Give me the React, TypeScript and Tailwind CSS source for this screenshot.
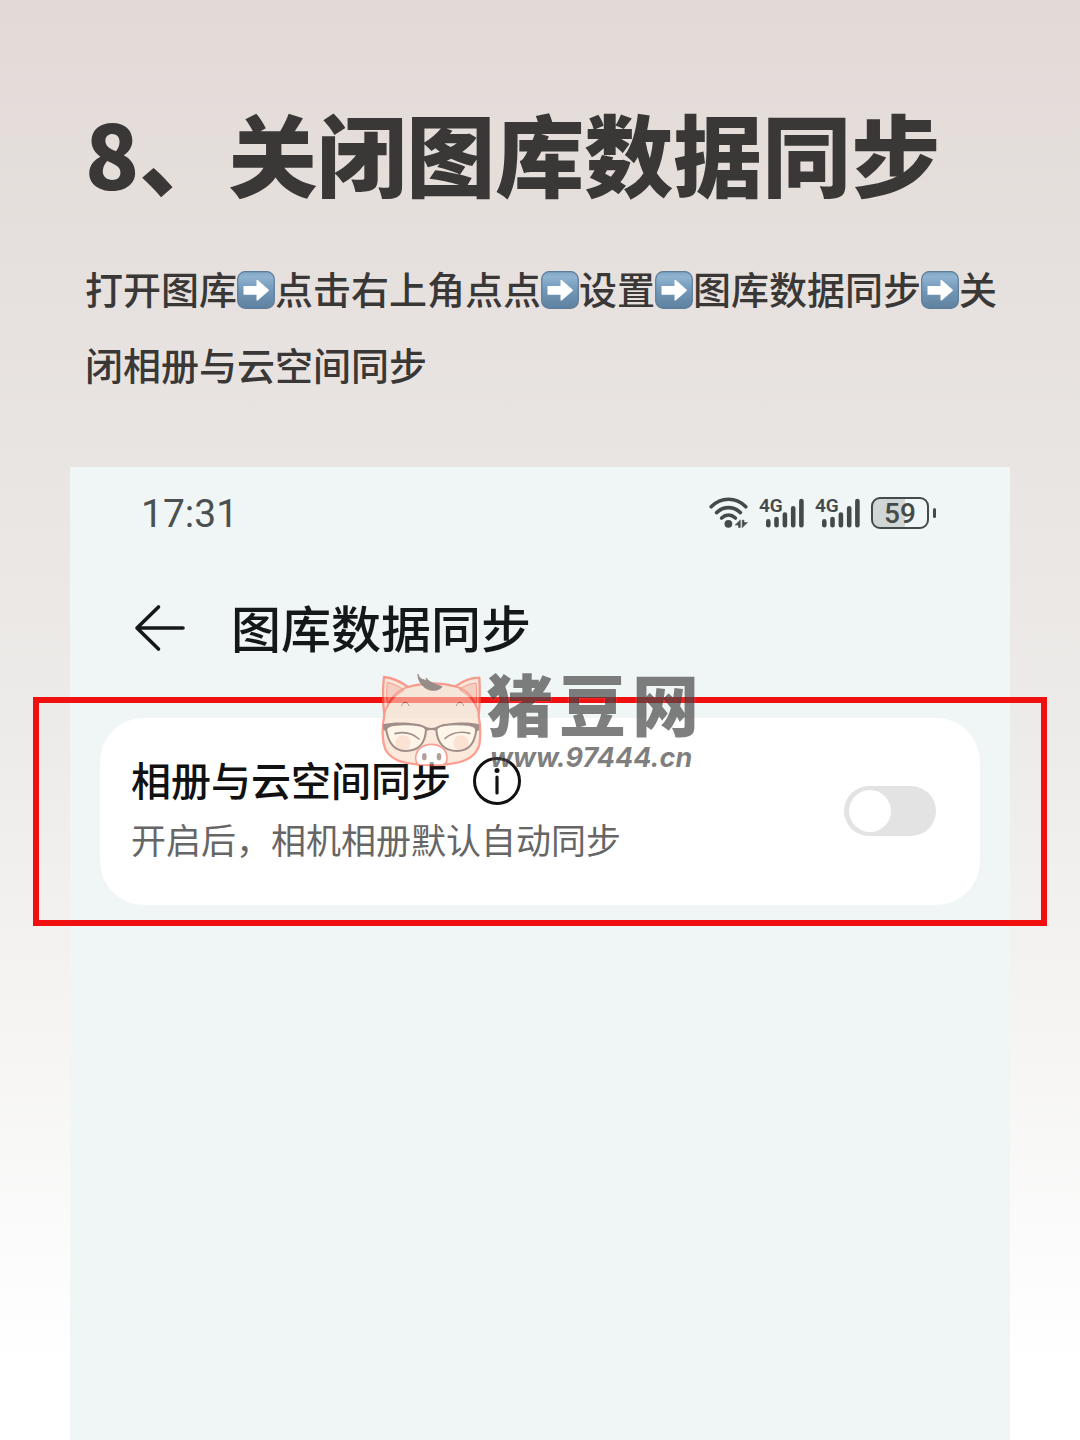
import { useState } from "react";

const sans = "font-['Noto_Sans_CJK_SC','Noto_Sans',sans-serif]";

function ArrowEmoji() {
  return (
    <svg
      role="img"
      aria-label="➡️"
      viewBox="0 0 38 38"
      className="inline-block size-[38px] align-[-5px]"
    >
      <defs>
        <linearGradient id="key" x1="0" y1="0" x2="0" y2="1">
          <stop offset="0" stopColor="#7fa6c6" />
          <stop offset="0.14" stopColor="#8fb3d0" />
          <stop offset="0.5" stopColor="#7398b8" />
          <stop offset="1" stopColor="#5f819f" />
        </linearGradient>
      </defs>
      <rect x="0.7" y="0.7" width="36.6" height="36.6" rx="7.5" fill="url(#key)" stroke="#5c7c99" strokeWidth="1.2" />
      <path d="M6.500 15h13V9.600c0-.7.7-1 1.200-.5L31.500 18.600c.5.4.5 1.100 0 1.500l-10.800 9.300c-.5.4-1.200.2-1.200-.5v-5.200h-13z" fill="#fff" />
    </svg>
  );
}

function WifiIcon() {
  return (
    <svg aria-hidden="true" viewBox="0 0 40 32" className="h-8 w-10" fill="none" stroke="#444a4a" strokeLinecap="round">
      <path d="M2.2 9.8C12-.2 27-.2 36.8 9.8" strokeWidth="3.6" />
      <path d="M7.6 15.6c7-6.6 16.8-6.6 23.8 0" strokeWidth="3.6" />
      <path d="M12.6 21c4.2-3.8 9.6-3.8 13.8 0" strokeWidth="3.6" />
      <circle cx="19.4" cy="26.8" r="3.9" fill="#444a4a" stroke="none" />
      <path d="M31.3 23.200v7.200h-1.800v-2.400h-3zM33.200 30.400v-7.200h1.800v2.400h3.200z" fill="#444a4a" stroke="#444a4a" strokeWidth=".6" />
    </svg>
  );
}

function Signal() {
  return (
    <div className="relative h-8 w-[46px]">
      <span className="absolute left-0 top-0 font-[Roboto,sans-serif] text-[19px] font-semibold leading-[18px] text-[#444a4a]">4G</span>
      <svg aria-hidden="true" viewBox="0 0 46 32" className="size-full" stroke="#444a4a" strokeWidth="4.6" strokeLinecap="round">
        <path d="M9.3 24.4v3.8M17.5 22v6.2M25.9 17.5v10.7M34.2 11.3v16.9M42.4 4v24.2" />
      </svg>
    </div>
  );
}

function Battery() {
  return (
    <div className="flex items-center gap-1">
      <div className="flex h-8 w-[58px] items-center justify-center rounded-[9px] border-2 border-[#444a4a] bg-linear-to-r from-[#d0d5d5] from-59% to-transparent to-59% pt-0.5 font-[Roboto,sans-serif] text-[28px] font-medium leading-none text-[#444a4a]">
        59
      </div>
      <span className="h-2.5 w-[3px] rounded-full bg-[#444a4a]" />
    </div>
  );
}

function PigLogo() {
  return (
    <svg aria-hidden="true" viewBox="0 0 345 330" className="h-[110px] w-[115px] opacity-60" strokeLinecap="round" strokeLinejoin="round">
      <path d="M28 150C22 100 24 60 27 36c22 2 50 14 72 30 50-14 98-14 142-2 22-16 50-26 72-26 2 36 2 76-2 116 6 30 6 60 2 86-12 44-60 60-143 60S34 286 26 236c-4-24-4-56 2-86z" fill="#f9dcc6" stroke="#fb5f48" strokeWidth="7" />
      <path d="M38 126c-4-26-4-50-1-74 18 4 36 12 50 24-24 14-40 30-49 50zM303 126c2-26 3-50 0-72-18 2-36 8-50 20 24 14 40 30 50 52z" fill="#f6b59f" stroke="#fb5f48" strokeWidth="3" />
      <path d="M28 146c14-46 38-70 71-80M311 146c-10-44-34-72-70-82" fill="none" stroke="#fb5f48" strokeWidth="5" />
      <path d="M129 29c4 12 14 16 28 18l-4-8c8 10 18 16 48 26-8 12-32 14-46 6-14-8-26-24-26-42z" fill="#5f4640" stroke="#5f4640" strokeWidth="3" />
      <path d="M80 122c4-13 16-15 22 0M244 122c6-15 18-13 22 0" fill="none" stroke="#7b5a50" strokeWidth="3" />
      <path d="M33 190c-2-8 12-12 58-12 40 0 60 6 62 16-2 40-22 64-60 64-36 0-54-26-60-68zM184 194c2-10 22-16 60-16s62 4 60 14c-4 42-22 66-58 66-38 0-60-24-62-64z" fill="#fdf0d8" />
      <circle cx="84" cy="234" r="23" fill="#fbcfb6" />
      <circle cx="258" cy="234" r="23" fill="#fbcfb6" />
      <path d="M60 206c24-6 52-2 72 16M210 220c20-16 48-22 74-15" fill="none" stroke="#65443c" strokeWidth="5" />
      <path d="M33 190c-2-8 12-12 58-12 40 0 60 6 62 16-2 40-22 64-60 64-36 0-54-26-60-68zM184 194c2-10 22-16 60-16s62 4 60 14c-4 42-22 66-58 66-38 0-60-24-62-64z" fill="none" stroke="#65443c" strokeWidth="6" />
      <path d="M24 178c40-10 104-6 130 8 10 4 20 4 30 0 30-14 90-18 129-8l-1 18c-5 2-7 4-9 8-2-22-14-24-59-24-40 0-56 5-60 18-8-4-22-4-30 0-4-13-22-18-62-18-44 0-58 6-58 22-2-4-4-6-9-8z" fill="#65443c" />
      <path d="M122 280c0-26 20-42 47-42s47 16 47 42c0 12-6 20-14 20h-66c-8 0-14-8-14-20z" fill="#fff" stroke="#fb5f48" strokeWidth="5" />
      <ellipse cx="148" cy="275" rx="7" ry="11" fill="#875f58" />
      <ellipse cx="192" cy="275" rx="7" ry="11" fill="#875f58" />
    </svg>
  );
}

function Watermark() {
  return (
    <div className="pointer-events-none absolute -top-[38px] left-[336px] flex text-black/50">
      <PigLogo />
      <div className="-ml-1 flex flex-col [text-shadow:0_0_2px_rgba(255,255,255,0.4)]">
        <div className="flex gap-[6px] text-[67px] font-black leading-[74px] [font-style:oblique_6deg]">
          <span>猪</span>
          <span>豆</span>
          <span>网</span>
        </div>
        <span className="pl-1 font-[Inter,sans-serif] text-[27px] font-bold italic leading-[38px]">www.97444.cn</span>
      </div>
    </div>
  );
}

export default function App() {
  const [sync, setSync] = useState(false);
  return (
    <main lang="zh-CN" className={`${sans} flex min-h-screen flex-col overflow-hidden bg-linear-to-b from-[#e2dad7] via-[#edebe9] to-white to-95% text-[#393836]`}>
      <header className="pl-[85px] pr-[70px] pt-[107px]">
        <h1 className="text-[89px] font-black leading-[90px]">8、关闭图库数据同步</h1>
        <p className="mt-[53px] text-[38px] font-medium leading-[76px]">
          打开图库<ArrowEmoji />点击右上角点点<ArrowEmoji />设置<ArrowEmoji />图库数据同步<ArrowEmoji />关<wbr />闭相册与云空间同步
        </p>
      </header>

      <section className="mx-[70px] mt-[65px] flex-1 bg-[#f0f6f6]">
        <div className="flex h-[92px] items-center justify-between pl-[71px] pr-[74px]">
          <time className="pt-0.5 font-[Roboto,sans-serif] text-[39px] leading-none text-[#4b5050]">17:31</time>
          <div className="flex items-center gap-2.5">
            <WifiIcon />
            <Signal />
            <Signal />
            <Battery />
          </div>
        </div>

        <div className="flex h-[138px] items-center gap-[45px] pl-[64px]">
          <button type="button" aria-label="返回">
            <svg viewBox="0 0 52 48" className="h-12 w-[52px]" fill="none" stroke="#14181a" strokeWidth="3.6" strokeLinecap="round" strokeLinejoin="round">
              <path d="M49 24H3M24.500 3 3 24l21.500 21" />
            </svg>
          </button>
          <h2 className="pb-1 text-[50px] font-medium leading-[60px] text-[#14181a]">图库数据同步</h2>
        </div>

        <div className="relative -mx-[37px] border-6 border-[#f01010] px-[61px] py-[15px]">
          <div className="flex items-center justify-between rounded-[44px] bg-white pb-[42px] pl-[31px] pr-[44px] pt-[37px]">
            <div>
              <div className="flex items-center gap-[21px]">
                <label htmlFor="sync" className="pb-1 text-[40px] font-medium leading-[48px] text-[#111]">相册与云空间同步</label>
                <button type="button" aria-label="说明">
                  <svg viewBox="0 0 50 50" className="size-[50px]" fill="none" stroke="#111" strokeWidth="3" strokeLinecap="round">
                    <circle cx="25" cy="25" r="22.500" />
                    <path d="M25 21v16" strokeWidth="3.200" />
                    <circle cx="25" cy="14.500" r="2.500" fill="#111" stroke="none" />
                  </svg>
                </button>
              </div>
              <p className="mt-2 text-[35px] leading-[48px] text-[#666]">开启后，相机相册默认自动同步</p>
            </div>
            <input
              id="sync"
              type="checkbox"
              role="switch"
              checked={sync}
              onChange={(e) => setSync(e.target.checked)}
              className="mt-1 flex h-[50px] w-[92px] appearance-none items-center rounded-full bg-[#e3e3e3] px-[5px] before:size-[42px] before:rounded-full before:bg-white checked:justify-end checked:bg-blue-500"
            />
          </div>
          <Watermark />
        </div>
      </section>
    </main>
  );
}
